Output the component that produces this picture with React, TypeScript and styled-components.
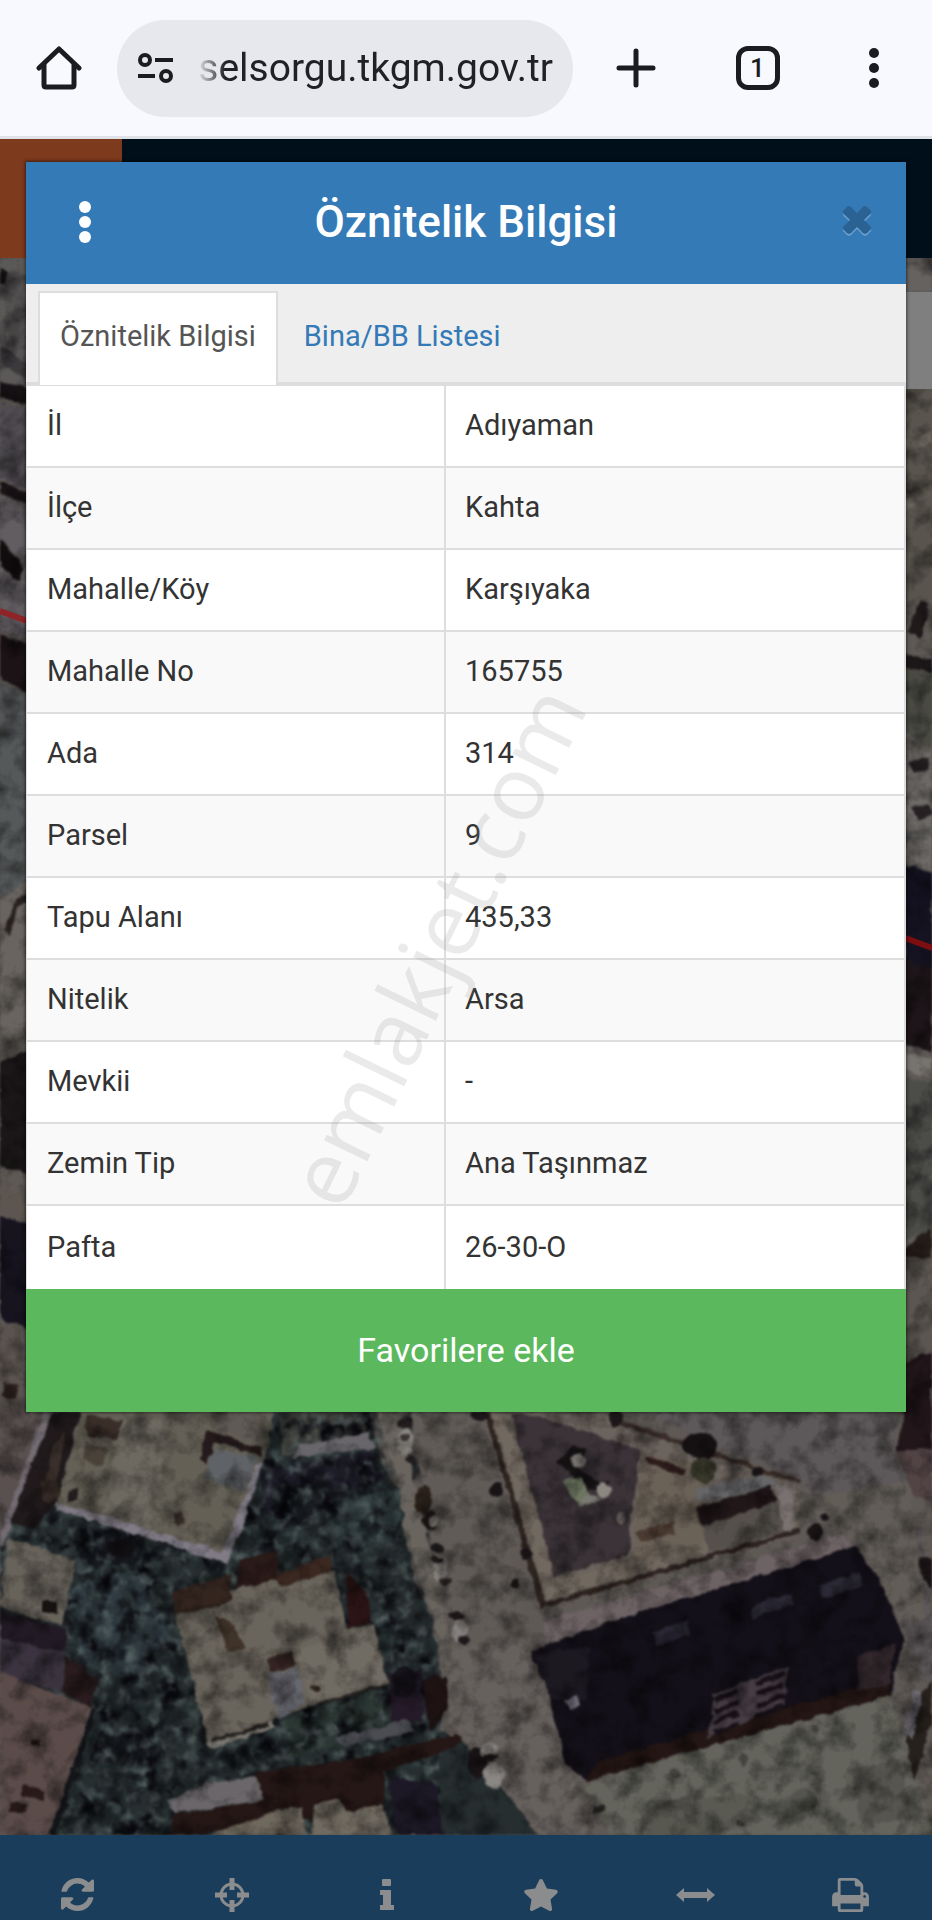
import React, { useState } from 'react';
import styled, { createGlobalStyle, css } from 'styled-components';
import { FaStar } from 'react-icons/fa';

// --- Global ---

const GlobalStyle = createGlobalStyle`
    *, *::before, *::after { box-sizing: border-box; }
    body {
        margin: 0;
        background: #1a3d5b;
        font-family: Roboto, 'Liberation Sans', sans-serif;
    }
    button, input { font-family: inherit; }
`;

const Page = styled.div`
    display: flex;
    flex-direction: column;
    min-height: 100vh;
`;

// --- Browser bar ---

const BrowserBar = styled.header`
    display: flex;
    align-items: center;
    height: 139px;
    background: #f8f9ff;
    border-bottom: 3px solid #dfe2e6;
`;

const BarButton = styled.button<{ $width: number }>`
    display: flex;
    align-items: center;
    justify-content: center;
    width: ${props => props.$width}px;
    height: 97px;
    padding: 0;
    border: none;
    background: none;
    color: #1b1c20;
`;

const AddressBar = styled.label`
    display: flex;
    flex: 1;
    align-items: center;
    gap: 22px;
    min-width: 0;
    height: 97px;
    padding: 0 20px;
    border-radius: 49px;
    background: #e6e8ed;
    color: #1b1c20;

    svg { flex: none; }
`;

const AddressInput = styled.input`
    flex: 1;
    min-width: 0;
    height: 60px;
    padding: 0;
    border: none;
    outline: none;
    background: none;
    color: #1f2125;
    font-size: 39px;
    text-align: right;
    mask-image: linear-gradient(to right, transparent 0, #000 28px);
`;

const TabCount = styled.span`
    display: flex;
    align-items: center;
    justify-content: center;
    width: 44px;
    height: 44px;
    border: 5px solid #1b1c20;
    border-radius: 12px;
    font-size: 26px;
    font-weight: 500;
`;

// --- Site ---

const Site = styled.div`
    display: grid;
    flex: 1;
    grid-template-columns: minmax(0, 1fr);
`;

const Background = styled.div`
    grid-area: 1 / 1;
    display: flex;
    flex-direction: column;
`;

const SiteHeader = styled.div`
    height: 119px;
    background: linear-gradient(to right, #7d3a1c 122px, #000f1a 122px);
`;

const MapArea = styled.div`
    display: flex;
    flex: 1;
    height: 0;
    min-height: 1200px;
    background: #5b5652;
    overflow: hidden;
`;

const MapSvg = styled.svg`
    width: 100%;
    height: 100%;
`;

const Toolbar = styled.nav`
    display: grid;
    grid-template-columns: repeat(6, 1fr);
    height: 85px;
    padding: 34px 4px 0 0;
    background: #1a3d5b;
`;

const ToolButton = styled.button`
    display: flex;
    align-items: center;
    justify-content: center;
    padding: 0;
    border: none;
    background: none;
    color: #8b8c8e;
`;

// --- Modal ---

const ModalLayer = styled.div`
    z-index: 1;
    grid-area: 1 / 1;
    align-self: start;
    padding: 23px 26px;
`;

const Modal = styled.section`
    position: relative;
    background: #fff;
    box-shadow: 0 0 3px 1px rgba(0, 0, 0, 0.5);
`;

const ModalHeader = styled.div`
    display: grid;
    grid-template-columns: 118px 1fr 118px;
    align-items: center;
    height: 122px;
    padding-bottom: 2px;
    background: #347ab7;
`;

const ModalTitle = styled.h1`
    margin: 0;
    color: #fff;
    font-size: 44px;
    font-weight: 500;
    line-height: 52px;
    text-align: center;
`;

const HeaderButton = styled.button<{ $end?: boolean }>`
    display: flex;
    align-items: center;
    justify-content: center;
    width: ${props => (props.$end ? 98 : 118)}px;
    height: 100px;
    padding: 0;
    border: none;
    background: none;
    color: #fff;
    justify-self: ${props => (props.$end ? 'end' : 'start')};
`;

const Tabs = styled.div`
    display: flex;
    height: 102px;
    padding: 7px 12px 0;
    background: #eee;
    border-bottom: 4px solid #ddd;
`;

const Tab = styled.button<{ $active: boolean }>`
    height: 94px;
    margin-right: 4px;
    padding: 0 20px 6px;
    border: 2px solid transparent;
    border-bottom: none;
    background: none;
    color: #337ab7;
    font-size: 29px;

    ${props => props.$active && css`
        border-color: #ddd;
        background: #fff;
        color: #555;
    `}
`;

const Table = styled.table`
    width: 100%;
    table-layout: fixed;
    border-collapse: separate;
    border-spacing: 0;
    border: solid #ddd;
    border-width: 0 2px 0 1px;
    color: #333;
    font-size: 29px;
`;

const Row = styled.tr`
    &:nth-child(even) { background: #f9f9f9; }

    &:last-child > * {
        height: 83px;
        border-bottom: none;
    }
`;

const cell = css`
    height: 82px;
    padding: 0 20px 2px;
    border-bottom: 2px solid #ddd;
    font-weight: 400;
    text-align: left;
`;

const NameCell = styled.th`
    ${cell}
    width: 419px;
    border-right: 2px solid #ddd;
`;

const ValueCell = styled.td`
    ${cell}
    padding-left: 19px;
`;

const FavouriteButton = styled.button`
    display: block;
    width: 100%;
    height: 123px;
    padding: 0 0 2px;
    border: none;
    background: #5cb85c;
    color: #fff;
    font-size: 34px;
`;

const Watermark = styled.span`
    position: absolute;
    top: 783px;
    left: 408px;
    color: rgba(140, 140, 140, 0.18);
    font-family: 'Open Sans', 'Noto Sans', sans-serif;
    font-size: 90px;
    font-weight: 500;
    line-height: 1;
    pointer-events: none;
    transform: translate(-50%, -50%) rotate(-64deg);
`;

// --- Icons ---

const HomeIcon = () => (
    <svg width="46" height="46" viewBox="0 0 46 46" fill="none" stroke="currentColor" strokeWidth="5" strokeLinecap="round" strokeLinejoin="round">
        <path d="M3 23 L23 4 L43 23" />
        <path d="M8 20 V40 Q8 42 10 42 H36 Q38 42 38 40 V20" />
    </svg>
);

const TuneIcon = () => (
    <svg width="38" height="32" viewBox="0 0 38 32" fill="none" stroke="currentColor" strokeWidth="4">
        <circle cx="8" cy="8" r="5" />
        <path d="M18 8 H36 M1 24 H18" />
        <circle cx="29" cy="24" r="5" />
    </svg>
);

const PlusIcon = () => (
    <svg width="40" height="40" viewBox="0 0 40 40" stroke="currentColor" strokeWidth="5" strokeLinecap="round">
        <path d="M20 3 V37 M3 20 H37" />
    </svg>
);

const DotsIcon = ({ r }: { r: number }) => (
    <svg width="14" height="44" viewBox="0 0 14 44" fill="currentColor">
        <circle cx="7" cy="7" r={r} />
        <circle cx="7" cy="22" r={r} />
        <circle cx="7" cy="37" r={r} />
    </svg>
);

const cross = 'M3 4 Q7 -2 11 4 L15 8 L19 4 Q23 -2 27 4 Q32 7 26 11 L22 15 L26 19 Q32 23 27 26 Q23 32 19 26 L15 22 L11 26 Q7 32 3 26 Q-2 23 4 19 L8 15 L4 11 Q-2 7 3 4 Z';

const CloseIcon = () => (
    <svg width="30" height="34" viewBox="0 0 30 34">
        <path d={cross} transform="translate(0 2)" fill="#6b9fcd" />
        <path d={cross} fill="#296293" />
    </svg>
);

const RefreshIcon = () => (
    <svg width="33" height="33" viewBox="0 128 1536 1536" fill="currentColor">
        <path d="M1511 1056q0 5-1 7-64 268-268 434.500t-478 166.500q-146 0-282.500-55t-243.500-157l-129 129q-19 19-45 19t-45-19-19-45v-448q0-26 19-45t45-19h448q26 0 45 19t19 45-19 45l-137 137q71 66 161 102t187 36q134 0 250-65t186-179q11-17 53-117 8-23 30-23h192q13 0 22.500 9.500t9.500 22.500zm25-800v448q0 26-19 45t-45 19h-448q-26 0-45-19t-19-45 19-45l138-138q-148-137-349-137-134 0-250 65t-186 179q-11 17-53 117-8 23-30 23h-199q-13 0-22.500-9.500t-9.500-22.500v-7q65-268 270-434.500t480-166.500q146 0 284 55.500t245 156.500l130-129q19-19 45-19t45 19 19 45z" />
    </svg>
);

const TargetIcon = () => (
    <svg width="34" height="34" viewBox="0 0 34 34" fill="none" stroke="currentColor">
        <circle cx="17" cy="17" r="11" strokeWidth="3" />
        <path d="M17 0 V12 M17 22 V34 M0 17 H12 M22 17 H34" strokeWidth="5" />
    </svg>
);

const InfoIcon = () => (
    <svg width="14" height="32" viewBox="0 0 14 32" fill="currentColor">
        <rect x="2" y="0" width="9" height="7" rx="1" />
        <path d="M0 11 H11 V26 H14 V31 H0 V26 H3 V16 H0 Z" />
    </svg>
);

const WidthIcon = () => (
    <svg width="39" height="16" viewBox="0 0 39 16" fill="currentColor">
        <path d="M0 8 L8 1 V5 H31 V1 L39 8 L31 15 V11 H8 V15 Z" />
    </svg>
);

const PrintIcon = () => (
    <svg width="37" height="34" viewBox="64 128 1664 1536" fill="currentColor">
        <path d="M448 1536h896v-256h-896v256zm0-640h896v-384h-160q-40 0-68-28t-28-68v-160h-640v640zm1152 64q0-26-19-45t-45-19-45 19-19 45 19 45 45 19 45-19 19-45zm128 0v416q0 13-9.500 22.500t-22.500 9.500h-224v160q0 40-28 68t-68 28h-960q-40 0-68-28t-28-68v-160h-224q-13 0-22.500-9.500t-9.500-22.500v-416q0-79 56.500-135.500t135.500-56.500h64v-544q0-40 28-68t68-28h672q40 0 88 20t76 48l152 152q28 28 48 76t20 88v256h64q79 0 135.500 56.500t56.500 135.500z" />
    </svg>
);

// --- Satellite map ---

// gardens: painted first, with leafy texture on top
const gardens: [string, string][] = [
    ['#262e30', '0,1412 368,1412 382,1465 400,1490 412,1570 432,1620 446,1700 440,1730 465,1745 505,1790 538,1835 0,1835'],
    ['#4b4d47', '280,1412 365,1412 372,1445 282,1455'],
    ['#1c1b26', '262,1470 370,1450 384,1480 352,1490 300,1520 262,1515'],
    ['#181b1f', '270,1490 330,1480 320,1520 280,1530'],
    ['#344143', '330,1500 400,1490 408,1540 340,1545'],
    ['#2f3b40', '66,1590 140,1565 172,1640 130,1680 80,1660'],
    ['#15181d', '80,1530 140,1530 150,1560 90,1570'],
    ['#2b3234', '400,1550 430,1640 395,1630 375,1570'],
    ['#181b20', '100,1730 160,1730 150,1770 90,1760'],
    ['#2b3733', '280,1720 380,1690 400,1730 290,1760'],
];

// [fill, points], painted in order
const shapes: [string, string][] = [
    // left edge
    ['#5b5858', '0,258 30,258 30,390 0,380'],
    ['#151113', '0,268 8,274 4,284 0,284'],
    ['#3c393c', '0,345 30,365 30,380 0,362'],
    ['#161114', '0,382 30,388 30,404 0,398'],
    ['#504c52', '0,404 30,408 30,490 0,478'],
    ['#1a1417', '0,482 30,492 30,505 0,494'],
    ['#625d61', '0,496 30,506 30,640 0,632'],
    ['#120d0e', '0,540 22,562 20,582 0,566'],
    ['#1c1317', '0,634 30,645 30,692 0,680'],
    ['#56595a', '0,684 30,694 30,880 0,900'],
    ['#69645f', '0,900 30,880 30,1050 0,1040'],
    ['#27201f', '6,930 16,898 30,894 30,902 18,904 10,936'],
    ['#1b1718', '0,1060 30,1050 30,1175 0,1165'],
    ['#5d5650', '0,1185 30,1195 30,1222 0,1212'],
    ['#171420', '0,1215 30,1224 30,1330 0,1318'],
    ['#5a534f', '0,1322 30,1334 30,1412 0,1412'],
    ['#2a201c', '4,1382 18,1386 16,1400 2,1396'],
    // right edge
    ['#66625f', '904,258 932,258 932,292 904,292'],
    ['#59544d', '904,389 932,389 932,600 904,600'],
    ['#6a655c', '904,440 932,432 932,442 904,452'],
    ['#6b665e', '904,500 932,484 932,494 904,512'],
    ['#201a1b', '908,632 920,600 930,604 920,640'],
    ['#1b1719', '904,652 932,660 932,672 904,668'],
    ['#4a4a43', '904,668 932,672 932,750 904,730'],
    ['#6c6966', '904,745 932,752 932,870 904,860'],
    ['#262022', '910,762 928,758 930,768 914,774'],
    ['#262022', '912,808 930,804 932,814 918,820'],
    ['#151322', '904,864 932,872 932,1050 904,1040'],
    ['#1d1519', '904,960 932,968 932,1052 904,1044'],
    ['#77736f', '904,1052 932,1058 932,1078 904,1070'],
    ['#4c4d49', '904,1076 932,1084 932,1230 904,1240'],
    ['#241c19', '904,1248 932,1228 932,1258 904,1258'],
    ['#5b5651', '904,1262 932,1256 932,1350 904,1360'],
    ['#22161b', '904,1362 932,1352 932,1448 896,1452 904,1412'],
    // garden path
    ['#68666a', '300,1445 368,1432 375,1448 292,1458'],
    // street on the far left
    ['#59504f', '0,1412 46,1412 0,1548'],
    ['#736c72', '44,1412 52,1412 4,1545 0,1545 0,1535'],
    ['#211a1c', '52,1412 82,1412 58,1500 34,1530 10,1522'],
    ['#3a302b', '52,1450 66,1430 56,1490 42,1496'],
    // block above the gardens
    ['#646056', '80,1412 274,1412 262,1465 228,1562 56,1505'],
    ['#6d6960', '120,1420 170,1420 150,1530 105,1512'],
    ['#3a2e28', '84,1416 122,1420 118,1440 88,1436'],
    ['#494239', '86,1442 108,1448 104,1466 84,1460'],
    ['#605a54', '212,1412 268,1412 260,1444 214,1430'],
    ['#241a1b', '206,1430 262,1448 260,1456 216,1442 206,1466 200,1460'],
    ['#5f6266', '214,1448 258,1458 244,1492 204,1478'],
    ['#807b85', '56,1502 140,1526 222,1552 258,1462 264,1464 228,1564 56,1509'],
    ['#241d1d', '68,1490 78,1488 78,1500 68,1502'],
    ['#39302b', '174,1514 182,1512 184,1524 176,1526'],
    // small house
    ['#67625a', '8,1538 76,1560 62,1625 0,1608'],
    ['#15120f', '42,1600 58,1602 58,1614 42,1612'],
    ['#221a24', '0,1612 66,1628 66,1652 0,1640'],
    ['#3b3440', '0,1640 66,1652 62,1692 0,1675'],
    ['#2a1c1e', '66,1655 98,1680 92,1708 62,1692'],
    // pink roof
    ['#5b4c4a', '0,1672 92,1708 50,1835 0,1835'],
    ['#14161a', '92,1708 96,1708 56,1835 50,1835'],
    ['#281a19', '22,1784 46,1790 46,1800 22,1796'],
    ['#281a19', '8,1802 28,1804 26,1812 8,1812'],
    ['#281a19', '32,1740 40,1740 40,1746 32,1746'],
    // central house
    ['#34251f', '172,1592 232,1574 232,1602 175,1616'],
    ['#3b2820', '276,1574 330,1556 332,1572 278,1588'],
    ['#2a1a18', '240,1560 276,1550 278,1582 236,1588'],
    ['#6a655c', '175,1616 230,1602 230,1590 275,1580 280,1588 334,1570 346,1630 374,1624 388,1684 310,1706 276,1718 272,1724 210,1748 190,1670'],
    ['#716c63', '294,1652 372,1626 386,1682 312,1700'],
    ['#2c1415', '346,1572 366,1592 372,1622 348,1630'],
    ['#67676f', '268,1674 297,1668 306,1702 280,1718 272,1700'],
    ['#342421', '266,1658 292,1650 296,1666 270,1672'],
    ['#403329', '216,1616 234,1626 246,1648 228,1652'],
    ['#7a766f', '206,1742 272,1722 274,1728 210,1749'],
    ['#24211f', '212,1739 268,1722 268,1726 212,1743'],
    ['#24211f', '318,1702 384,1684 384,1687 318,1706'],
    // lower row of houses
    ['#241a28', '388,1672 420,1670 424,1720 392,1725'],
    ['#251716', '255,1772 350,1760 462,1733 462,1744 385,1772 382,1806 262,1828 172,1835 172,1815 262,1800'],
    ['#6a6669', '166,1802 206,1784 256,1776 264,1800 175,1813'],
    ['#6f685d', '210,1835 270,1812 302,1806 306,1835'],
    ['#706a60', '314,1804 338,1798 346,1812 382,1804 392,1835 312,1835'],
    ['#4c4d53', '335,1738 408,1720 414,1732 345,1746'],
    ['#1c1825', '390,1776 436,1784 444,1835 396,1835'],
    ['#1d1213', '422,1680 446,1676 448,1710 430,1732'],
    // road
    ['#67615e', '448,1650 520,1640 548,1700 590,1835 540,1835 480,1760 448,1720'],
    ['#605b57', '410,1412 478,1412 530,1640 450,1650'],
    ['#69645e', '376,1412 398,1412 450,1640 440,1640 404,1530 400,1490'],
    // triangular park
    ['#6b635d', '482,1412 600,1412 800,1482 798,1535 540,1610'],
    ['#2e2420', '484,1412 490,1412 546,1602 800,1528 800,1533 540,1609'],
    ['#6d6264', '548,1620 855,1530 858,1546 536,1646'],
    ['#71685f', '492,1412 508,1412 556,1580 632,1560 796,1516 797,1527 548,1600'],
    ['#3b3338', '512,1414 532,1414 640,1450 628,1555 554,1576'],
    ['#6a6157', '642,1452 700,1465 704,1550 632,1562'],
    ['#4b3a31', '636,1532 672,1522 676,1534 640,1542'],
    ['#2c1c1a', '646,1456 686,1468 684,1476 648,1464'],
    ['#676669', '694,1490 768,1474 776,1486 698,1502'],
    ['#211719', '697,1506 770,1486 778,1500 702,1528'],
    ['#55504b', '702,1526 778,1500 784,1532 710,1552'],
    ['#797270', '776,1484 796,1490 794,1528 784,1532'],
    ['#3b2e2a', '620,1420 800,1480 798,1484 616,1424'],
    ['#151214', '556,1462 572,1446 586,1448 580,1470 600,1482 612,1480 606,1492 586,1490 570,1474'],
    ['#6c7560', '564,1480 582,1478 590,1496 580,1506 568,1492'],
    ['#5d5859', '640,1412 898,1412 894,1455 915,1510 930,1580 932,1700 900,1620 856,1545 828,1526 800,1480'],
    ['#625d57', '800,1500 910,1480 925,1620 900,1620 858,1546'],
    ['#524345', '896,1452 932,1448 932,1500 914,1498'],
    ['#1a1415', '918,1556 932,1560 932,1590 922,1574'],
    // dark roof
    ['#141019', '530,1652 620,1618 855,1546 880,1580 904,1640 890,1696 586,1780 566,1764 548,1690'],
    ['#241614', '600,1760 888,1680 890,1696 586,1780'],
    ['#1c1921', '534,1654 590,1646 586,1700 552,1700'],
    ['#2a2734', '652,1632 688,1620 690,1634 656,1646'],
    ['#2b2935', '750,1606 792,1592 792,1604 754,1618'],
    ['#2b2935', '818,1586 860,1572 862,1586 822,1598'],
    ['#463c44', '714,1694 788,1666 784,1706 708,1738'],
    ['#32272b', '858,1656 896,1644 890,1684 856,1692'],
    ['#6c6672', '564,1700 578,1696 580,1706 568,1710'],
    // bottom right roof
    ['#64645c', '583,1783 888,1697 906,1740 932,1835 612,1835'],
    ['#595850', '640,1812 700,1790 720,1835 640,1835'],
    ['#57554f', '850,1770 900,1760 912,1820 860,1824'],
    ['#5a5a52', '696,1800 750,1792 746,1830 712,1832'],
    ['#27211d', '906,1740 918,1700 932,1680 932,1720 914,1782'],
    ['#747078', '904,1726 914,1690 922,1692 912,1740'],
    ['#2d2a26', '592,1808 604,1804 604,1812 592,1814'],
];

// [x, y, rx, ry, fill]
const spots: [number, number, number, number, string][] = [
    [405, 1424, 8, 4, '#241d1e'], [406, 1442, 8, 14, '#8a8682'], [405, 1437, 5, 4, '#3c3637'], [411, 1460, 5, 3, '#262020'],
    [424, 1500, 9, 14, '#2b211a'], [430, 1520, 8, 9, '#1c1717'], [434, 1520, 5, 6, '#8d8985'],
    [437, 1548, 7, 5, '#1d1a1b'], [440, 1568, 8, 14, '#84807c'], [436, 1560, 6, 3, '#272020'], [445, 1581, 5, 3, '#272020'],
    [456, 1616, 8, 4, '#1f1a1b'], [460, 1632, 8, 12, '#85817e'], [464, 1640, 6, 4, '#211b1d'],
    [478, 1762, 10, 16, '#1b1517'], [489, 1750, 9, 9, '#85817e'], [494, 1776, 10, 13, '#8a8683'], [490, 1758, 8, 3, '#1b1517'],
    [404, 1682, 13, 16, '#16131a'], [436, 1694, 12, 20, '#1e1213'],
    [578, 1460, 8, 8, '#8a8580'], [604, 1490, 8, 8, '#8c8780'], [590, 1500, 10, 4, '#7a7872'], [621, 1518, 5, 5, '#746c6a'],
    [700, 1446, 17, 14, '#151113'], [704, 1470, 13, 12, '#3a3a2c'], [616, 1418, 8, 9, '#1b1718'],
    [496, 1490, 7, 7, '#181315'], [526, 1554, 7, 6, '#181315'], [515, 1584, 5, 4, '#1a1615'],
    [758, 1472, 5, 5, '#181315'], [815, 1532, 7, 8, '#181315'], [824, 1517, 4, 4, '#181315'],
    [480, 1415, 8, 5, '#1c1618'], [743, 1760, 4, 8, '#45443e'], [674, 1773, 5, 5, '#45443e'],
    [815, 1730, 4, 5, '#45443e'], [740, 1823, 4, 3, '#33312c'], [804, 1800, 12, 12, '#55554e'],
    [315, 1688, 4, 4, '#2a201c'], [120, 1548, 14, 9, '#120f12'], [50, 1490, 9, 12, '#352b26'],
];

const stripes = [1700, 1711, 1722, 1733];

const SatelliteMap = () => (
    <MapSvg viewBox="0 258 932 1577" preserveAspectRatio="xMidYMax slice" aria-hidden="true">
        <defs>
            <filter id="rough" x="0" y="0" width="100%" height="100%" colorInterpolationFilters="sRGB">
                <feTurbulence type="fractalNoise" baseFrequency="0.08" numOctaves="3" seed="4" result="n" />
                <feDisplacementMap in="SourceGraphic" in2="n" scale="7" xChannelSelector="R" yChannelSelector="G" />
                <feGaussianBlur stdDeviation="1" />
            </filter>
            <filter id="leaves" x="0" y="0" width="100%" height="100%" colorInterpolationFilters="sRGB">
                <feTurbulence type="fractalNoise" baseFrequency="0.05" numOctaves="4" seed="9" />
                <feColorMatrix values="0 0 0 0 0.030  0 0 0 0 0.030  0 0 0 0 0.050  3.200 0 0 0 -1.400" />
            </filter>
            <filter id="light" x="0" y="0" width="100%" height="100%" colorInterpolationFilters="sRGB">
                <feTurbulence type="fractalNoise" baseFrequency="0.08" numOctaves="3" seed="21" />
                <feColorMatrix values="0 0 0 0 0.330  0 0 0 0 0.380  0 0 0 0 0.380  0 2.600 0 0 -1.250" />
            </filter>
            <filter id="grain" x="0" y="0" width="100%" height="100%" colorInterpolationFilters="sRGB">
                <feTurbulence type="fractalNoise" baseFrequency="0.04" numOctaves="4" seed="2" />
                <feColorMatrix values="0 0 0 0 0  0 0 0 0 0  0 0 0 0 0  1.100 0 0 0 -0.450" />
            </filter>
        </defs>
        <g filter="url(#rough)">
            <rect x="0" y="258" width="932" height="1577" fill="#5e5955" />
            {gardens.map(([fill, points], i) => <polygon key={i} fill={fill} points={points} />)}
            <rect x="0" y="1412" width="440" height="423" filter="url(#leaves)" />
            <rect x="0" y="1412" width="440" height="423" filter="url(#light)" />
            {shapes.map(([fill, points], i) => <polygon key={i} fill={fill} points={points} />)}
            {stripes.map(y => (
                <path key={y} d={`M714 ${y} L738 ${y - 9} M756 ${y - 16} L784 ${y - 27}`} stroke="#181118" strokeWidth="5" />
            ))}
            {spots.map(([x, y, rx, ry, fill], i) => <ellipse key={i} cx={x} cy={y} rx={rx} ry={ry} fill={fill} />)}
        </g>
        <rect x="0" y="258" width="932" height="1577" filter="url(#grain)" />
        <rect x="904" y="292" width="28" height="97" fill="#7f7f7f" />
        <path d="M0 611 L30 622" stroke="#8f2428" strokeWidth="6" />
        <path d="M900 936 L932 948" stroke="#7c0d11" strokeWidth="6" />
    </MapSvg>
);

// --- Data ---

const attributes = [
    { name: 'İl', value: 'Adıyaman' },
    { name: 'İlçe', value: 'Kahta' },
    { name: 'Mahalle/Köy', value: 'Karşıyaka' },
    { name: 'Mahalle No', value: '165755' },
    { name: 'Ada', value: '314' },
    { name: 'Parsel', value: '9' },
    { name: 'Tapu Alanı', value: '435,33' },
    { name: 'Nitelik', value: 'Arsa' },
    { name: 'Mevkii', value: '-' },
    { name: 'Zemin Tip', value: 'Ana Taşınmaz' },
    { name: 'Pafta', value: '26-30-O' },
];

const tools = [
    { label: 'Yenile', icon: <RefreshIcon /> },
    { label: 'Konum', icon: <TargetIcon /> },
    { label: 'Bilgi', icon: <InfoIcon /> },
    { label: 'Favoriler', icon: <FaStar size={36} /> },
    { label: 'Ölçüm', icon: <WidthIcon /> },
    { label: 'Yazdır', icon: <PrintIcon /> },
];

const tabs = ['Öznitelik Bilgisi', 'Bina/BB Listesi'];

const App: React.FC = () => {
    const [activeTab, setActiveTab] = useState(tabs[0]);
    const [address, setAddress] = useState('selsorgu.tkgm.gov.tr');

    return (
        <Page lang="tr">
            <GlobalStyle />
            <BrowserBar>
                <BarButton $width={117} aria-label="Ana sayfa"><HomeIcon /></BarButton>
                <AddressBar>
                    <TuneIcon />
                    <AddressInput
                        aria-label="Adres"
                        value={address}
                        onChange={(e) => setAddress(e.target.value)}
                    />
                </AddressBar>
                <BarButton $width={126} aria-label="Yeni sekme"><PlusIcon /></BarButton>
                <BarButton $width={117} aria-label="Sekmeler"><TabCount>1</TabCount></BarButton>
                <BarButton $width={116} aria-label="Menü"><DotsIcon r={5} /></BarButton>
            </BrowserBar>

            <Site>
                <Background>
                    <SiteHeader />
                    <MapArea><SatelliteMap /></MapArea>
                    <Toolbar>
                        {tools.map(tool => (
                            <ToolButton key={tool.label} aria-label={tool.label}>{tool.icon}</ToolButton>
                        ))}
                    </Toolbar>
                </Background>

                <ModalLayer>
                    <Modal role="dialog" aria-labelledby="modal-title">
                        <ModalHeader>
                            <HeaderButton aria-label="Seçenekler"><DotsIcon r={6} /></HeaderButton>
                            <ModalTitle id="modal-title">Öznitelik Bilgisi</ModalTitle>
                            <HeaderButton $end aria-label="Kapat"><CloseIcon /></HeaderButton>
                        </ModalHeader>
                        <Tabs role="tablist">
                            {tabs.map(tab => (
                                <Tab
                                    key={tab}
                                    role="tab"
                                    aria-selected={tab === activeTab}
                                    $active={tab === activeTab}
                                    onClick={() => setActiveTab(tab)}
                                >
                                    {tab}
                                </Tab>
                            ))}
                        </Tabs>
                        <Table>
                            <tbody>
                                {attributes.map(item => (
                                    <Row key={item.name}>
                                        <NameCell scope="row">{item.name}</NameCell>
                                        <ValueCell>{item.value}</ValueCell>
                                    </Row>
                                ))}
                            </tbody>
                        </Table>
                        <FavouriteButton>Favorilere ekle</FavouriteButton>
                        <Watermark>emlakjet.com</Watermark>
                    </Modal>
                </ModalLayer>
            </Site>
        </Page>
    );
};

export default App;
